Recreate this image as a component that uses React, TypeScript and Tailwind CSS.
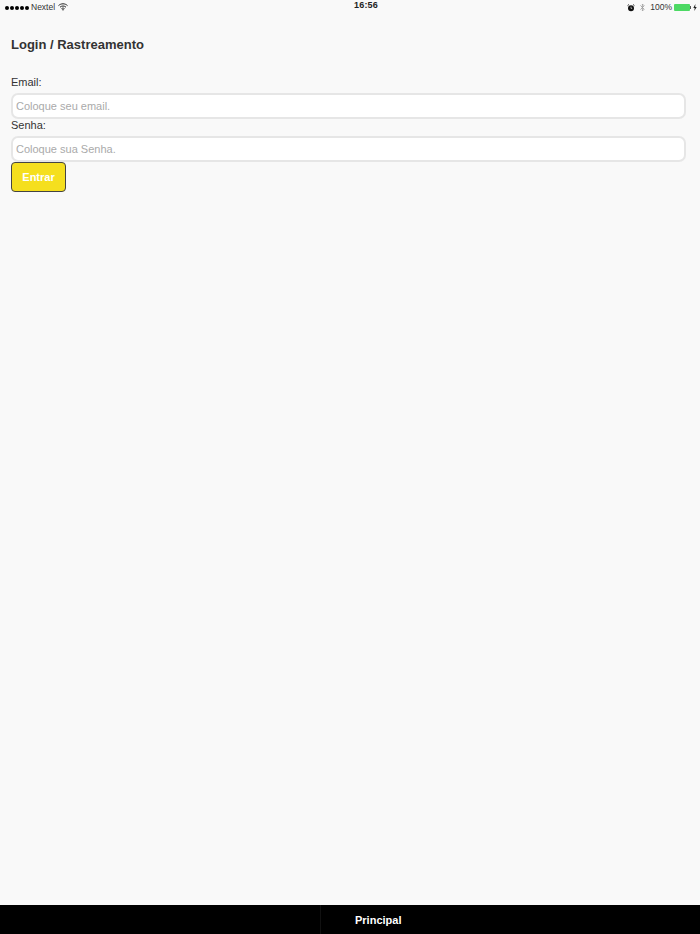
import { useState } from "react";

const StatusBar = () => (
  <div className="relative flex h-[15px] flex-none items-center justify-between pl-[5px] pr-[3px] text-[8.5px] text-[#333]">
    <div className="flex items-center">
      <div className="flex gap-px">
        {[0, 1, 2, 3, 4].map((dot) => (
          <div key={dot} className="h-1 w-1 rounded-full bg-black"></div>
        ))}
      </div>
      <span className="ml-[2px]">Nextel</span>
      <svg className="ml-[3px] -mt-px" width="10" height="8" viewBox="0 0 10 8" fill="none" stroke="#222" strokeWidth="1">
        <path d="M0.5 2.6C3 0.2 7 0.2 9.5 2.6" />
        <path d="M2 4.2C3.8 2.6 6.2 2.6 8 4.2" />
        <path d="M3.5 5.6C4.4 4.9 5.6 4.9 6.5 5.6" />
        <path d="M5 7.8L4 6.6C4.6 6.2 5.4 6.2 6 6.6Z" fill="#222" stroke="none" />
      </svg>
    </div>
    <div className="absolute left-[354px] top-[-1px] text-[9px] font-bold tracking-[0.2px] text-[#222]">16:56</div>
    <div className="flex items-center">
      <svg width="8" height="8" viewBox="0 0 8 8">
        <circle cx="4" cy="4.2" r="3" fill="#111" />
        <path d="M0.6 1.6L1.8 0.6M7.4 1.6L6.2 0.6" stroke="#111" strokeWidth="1" />
        <path d="M4 2.6V4.4H5.2" stroke="#fff" strokeWidth="0.6" fill="none" />
      </svg>
      <svg className="ml-[5px]" width="5" height="9" viewBox="0 0 5 9" fill="none" stroke="#999" strokeWidth="0.8">
        <path d="M0.4 2.4L4.2 6.2L2.4 8V1L4.2 2.8L0.4 6.6" />
      </svg>
      <span className="ml-[5px]">100%</span>
      <div className="ml-[2px] h-[7px] w-[16px] rounded-[1px] bg-[#4cd964]"></div>
      <div className="h-[3px] w-px bg-[#555]"></div>
      <svg className="ml-[2px]" width="4" height="7" viewBox="0 0 4 7">
        <path d="M2.4 0L0.3 3.9H1.7L1.3 7L3.7 2.9H2.2Z" fill="#222" />
      </svg>
    </div>
  </div>
);

export default function App() {
  const [email, setEmail] = useState("");
  const [senha, setSenha] = useState("");

  return (
    <div className="flex h-[934px] w-[700px] flex-col overflow-hidden bg-[#f9f9f9] font-['Liberation_Sans',Arial,sans-serif]">
      <StatusBar />

      <div className="flex-1 px-[11px]">
        <h1 className="mt-[21px] text-[13px] leading-[17px] font-bold text-[#333]">Login / Rastreamento</h1>

        <form className="mt-[22px] flex flex-col items-start" onSubmit={(e) => e.preventDefault()}>
          <label className="text-[11px] leading-[15px] text-[#333]">Email:</label>
          <input
            className="mt-[3px] h-[26px] w-[675px] rounded-[7px] border-2 border-[#e6e6e6] bg-white px-[3px] text-[11px] text-[#333] outline-none placeholder:text-[#aaa]"
            placeholder="Coloque seu email."
            value={email}
            onChange={(e) => setEmail(e.target.value)}
          />
          <label className="text-[11px] leading-[13px] text-[#333]">Senha:</label>
          <input
            className="mt-[4px] h-[26px] w-[675px] rounded-[7px] border-2 border-[#e6e6e6] bg-white px-[3px] text-[11px] text-[#333] outline-none placeholder:text-[#aaa]"
            placeholder="Coloque sua Senha."
            type="text"
            value={senha}
            onChange={(e) => setSenha(e.target.value)}
          />
          <button
            type="submit"
            className="h-[30px] w-[55px] rounded-[4px] border border-[#444] bg-[#f5df1e] text-[11px] font-bold text-white"
          >
            Entrar
          </button>
        </form>
      </div>

      <div className="flex h-[29px] flex-none items-center bg-black">
        <div className="h-full w-[321px] border-r border-[#111]"></div>
        <div className="ml-[34px] mt-[1px] text-[11px] font-bold text-white">Principal</div>
      </div>
    </div>
  );
}
